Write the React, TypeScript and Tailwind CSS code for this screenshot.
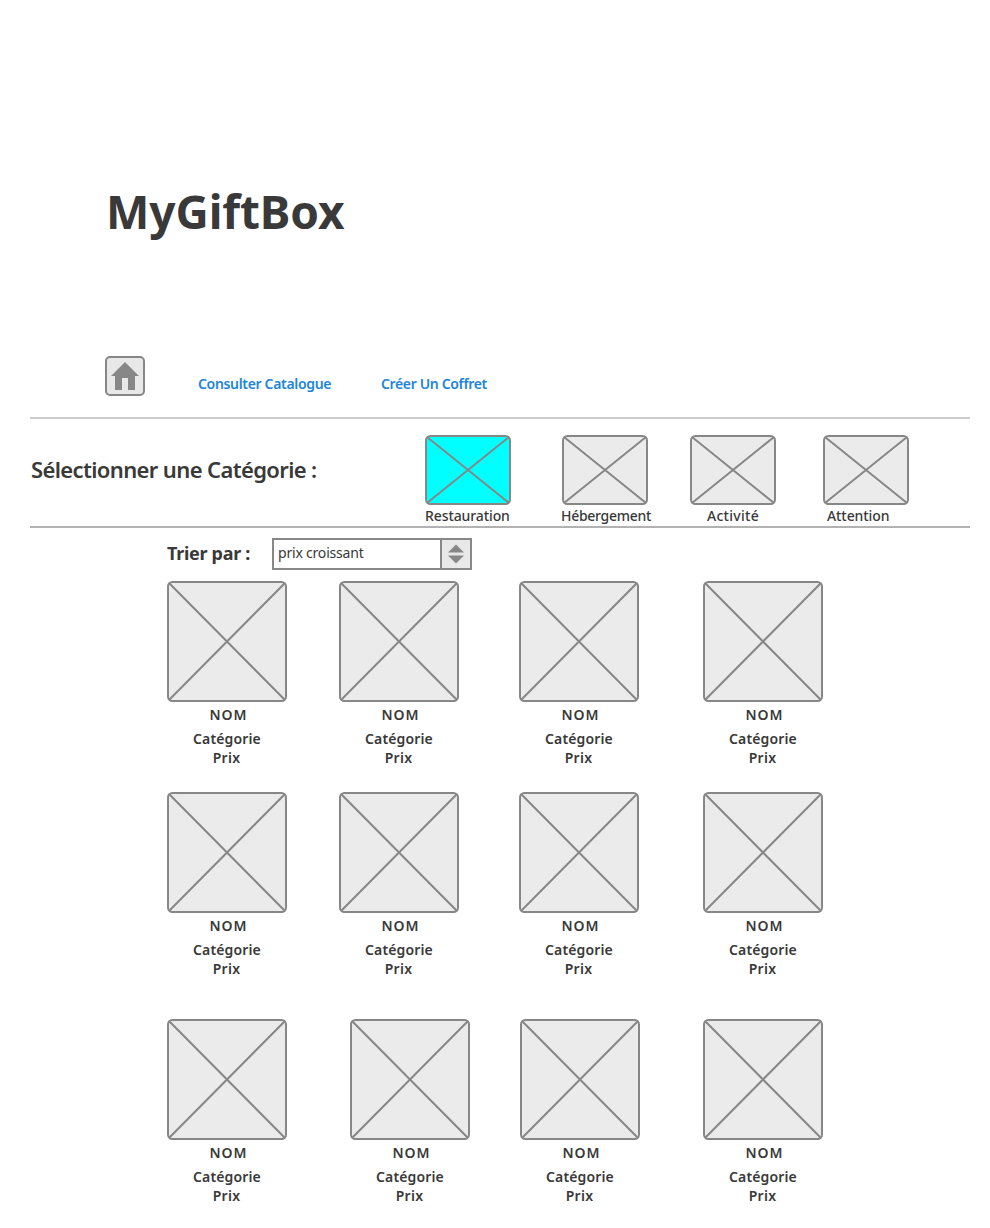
function Placeholder({ w, h, fill }: { w: number; h: number; fill: string }) {
  return (
    <svg width={w} height={h} className="block shrink-0">
      <rect x="1" y="1" width={w - 2} height={h - 2} rx="4.5" fill={fill} stroke="#878787" strokeWidth="2" />
      <path d={`M2 2L${w - 2} ${h - 2}M${w - 2} 2L2 ${h - 2}`} stroke="#878787" strokeWidth="2" />
    </svg>
  );
}

function Product({ className = "" }: { className?: string }) {
  return (
    <article className={`w-[120px] shrink-0 whitespace-nowrap text-center text-[14px] font-semibold ${className}`}>
      <Placeholder w={120} h={121} fill="#ebebeb" />
      <h3 className="mt-[3px] h-6 pl-[3px] leading-5 tracking-[1px]">NOM</h3>
      <p className="h-[19px] leading-5 tracking-[0.14px]">Catégorie</p>
      <p className="h-[19px] pr-px leading-5 tracking-[0.3px]">Prix</p>
    </article>
  );
}

const categories = [
  { name: "Restauration", box: "ml-[108px]", label: "tracking-[-0.1px]", fill: "#00ffff" },
  { name: "Hébergement", box: "ml-[51px]", label: "-ml-px tracking-[-0.28px]", fill: "#ebebeb" },
  { name: "Activité", box: "ml-[42px]", label: "ml-[17px] tracking-[0.28px]", fill: "#ebebeb" },
  { name: "Attention", box: "ml-[47px]", label: "ml-1 tracking-[-0.08px]", fill: "#ebebeb" },
];

export default function App() {
  return (
    <main className="h-[1228px] w-[990px] overflow-hidden bg-white font-['Noto_Sans',sans-serif] text-[#393939]">
      <header className="flex h-[346px] flex-col pl-[106px] pt-[180px]">
        <h1 className="text-[46px] font-bold leading-[63px] tracking-[-0.1px]">MyGiftBox</h1>
      </header>
      <nav className="flex h-[71px] pl-[105px] pt-[10px] text-[14px] font-semibold text-[#2185d8]">
        <svg width="40" height="40" className="shrink-0">
          <rect x="1" y="1" width="38" height="38" rx="4" fill="#e8e8e8" stroke="#878787" strokeWidth="2" />
          <path d="M20 6L34 20H30V34H23V22H17V34H10V20H6Z" fill="#878787" />
        </svg>
        <a className="ml-[53px] mt-[18px] w-[183px] leading-5 tracking-[-0.33px]">Consulter Catalogue</a>
        <a className="mt-[18px] leading-5 tracking-[-0.35px]">Créer Un Coffret</a>
      </nav>
      <section className="ml-[30px] flex h-[111px] w-[940px] border-b-2 border-t-2 border-b-[#b2b2b2] border-t-[#cccccc]">
        <h2 className="mt-[34px] w-[287px] shrink-0 whitespace-nowrap pl-px text-[22px] font-semibold leading-8 tracking-[-0.63px]">
          Sélectionner une Catégorie :
        </h2>
        {categories.map((c) => (
          <div key={c.name} className={`mt-4 w-[86px] shrink-0 whitespace-nowrap text-[14px] font-medium leading-5 ${c.box}`}>
            <Placeholder w={86} h={70} fill={c.fill} />
            <p className={`mt-px ${c.label}`}>{c.name}</p>
          </div>
        ))}
      </section>
      <div className="flex h-[53px] pl-[167px] pt-[10px]">
        <h2 className="w-[105px] whitespace-nowrap text-[18px] font-bold leading-[30px] tracking-[-0.3px]">Trier par :</h2>
        <button className="flex h-8 w-[200px] items-stretch border-2 border-[#878787] text-[14px]">
          <span className="w-[166px] pl-1 text-left leading-[26px] tracking-[-0.2px]">prix croissant</span>
          <span className="flex flex-1 items-center justify-center border-l-2 border-[#878787] bg-[#e8e8e8]">
            <svg width="16" height="20">
              <path d="M8 0.5L16 8.5H0ZM0 11.5H16L8 19.5Z" fill="#878787" />
            </svg>
          </span>
        </button>
      </div>
      <div className="flex h-[211px] pl-[167px]">
        <Product />
        <Product className="ml-[52px]" />
        <Product className="ml-[60px]" />
        <Product className="ml-16" />
      </div>
      <div className="flex h-[227px] pl-[167px]">
        <Product />
        <Product className="ml-[52px]" />
        <Product className="ml-[60px]" />
        <Product className="ml-16" />
      </div>
      <div className="flex pl-[167px]">
        <Product />
        <Product className="ml-[63px]" />
        <Product className="ml-[50px]" />
        <Product className="ml-[63px]" />
      </div>
    </main>
  );
}
